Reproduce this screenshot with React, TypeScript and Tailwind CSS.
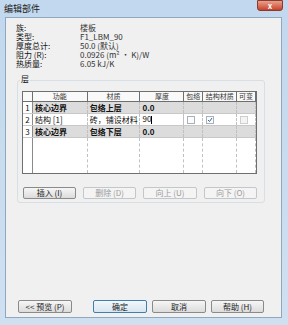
import React from 'react';

const font = { fontFamily: '"Noto Sans CJK SC", "Liberation Sans", sans-serif' };

const info = [
  ['族:', '楼板'],
  ['类型:', 'F1_LBM_90'],
  ['厚度总计:', '50.0 (默认)'],
  ['阻力 (R):', '0.0926 (m² · K)/W'],
  ['热质量:', '6.05 kJ/K'],
];

const cols = ['w-[55px]', 'w-[53px]', 'w-[44px]', 'w-[19px]', 'w-[34px]', 'w-[19px]'];

function Btn({ label, disabled, primary, w = 'w-[53px]', h = 'h-[12px]' }: { label: string; disabled?: boolean; primary?: boolean; w?: string; h?: string }) {
  return (
    <div
      className={`${w} ${h} flex items-center justify-center rounded-[2px] border text-[8px] leading-none whitespace-nowrap ${
        disabled
          ? 'border-[#c3c7ca] bg-[#f4f4f4] text-[#9a9a9a]'
          : primary
          ? 'border-[#3c7fb1] bg-gradient-to-b from-[#f2f7fb] to-[#d8e6f1] text-[#222]'
          : 'border-[#8a8a8a] bg-gradient-to-b from-[#f6f6f6] to-[#dcdcdc] text-[#222]'
      }`}
    >
      {label}
    </div>
  );
}

function Check({ checked, disabled }: { checked?: boolean; disabled?: boolean }) {
  return (
    <div className={`w-[8px] h-[8px] border ${disabled ? 'border-[#cfcfcf] bg-[#f4f4f4]' : 'border-[#a8b0b8] bg-[#fbfbfb]'} flex items-center justify-center`}>
      {checked && (
        <svg width="6" height="6" viewBox="0 0 6 6">
          <path d="M1 3 L2.5 4.5 L5 1" stroke="#3a64a8" strokeWidth="1" fill="none" />
        </svg>
      )}
    </div>
  );
}

function Row({ n, cells, gray, edit }: { n: string; cells: React.ReactNode[]; gray?: boolean; edit?: boolean }) {
  return (
    <div className="flex h-[12px] border-b border-[#c8c8c8]">
      <div className="w-[10px] flex items-center justify-center border-r border-[#8a8a8a] bg-white text-[8px] leading-none">{n}</div>
      {cells.map((c, i) => (
        <div
          key={i}
          className={`${cols[i]} flex items-center overflow-hidden whitespace-nowrap ${i >= 3 ? 'pl-[3px]' : 'px-[2px]'} border-r border-dashed border-[#c0c0c0] text-[8px] leading-none ${
            gray ? 'bg-[#dcdcdc] font-bold' : 'bg-white'
          } ${edit && i === 2 ? 'border-solid border-[#9a9a9a]' : ''}`}
        >
          {c}
        </div>
      ))}
    </div>
  );
}

export default function App() {
  return (
    <div className="w-[288px] h-[325px] bg-gradient-to-b from-[#c2d8ee] to-[#cfe0f1] flex flex-col text-[#111]" style={font}>
      <div className="h-[17px] flex items-start justify-between pl-[4px] pr-[5px]">
        <span className="text-[9px] leading-[17px] text-[#1a1a1a]">编辑部件</span>
        <div className="w-[26px] h-[11px] rounded-b-[3px] bg-gradient-to-b from-[#e8a08d] to-[#c6402a] border border-[#8c3a2c] flex items-center justify-center text-white text-[8px] font-bold leading-none">
          x
        </div>
      </div>
      <div className="flex-1 ml-[5px] mr-[6px] mb-[7px] bg-[#f0f0f0] border border-[#90a7be] flex flex-col">
        <div className="pt-[5px] pl-[10px] flex flex-col">
          {info.map(([k, v]) => (
            <div key={k} className="flex h-[9px] shrink-0 items-center text-[8px] leading-[8px] whitespace-nowrap">
              <span className="w-[64px]">{k}</span>
              <span className="text-[#333]">{v}</span>
            </div>
          ))}
        </div>
        <div className="ml-[11px] mt-[12px] w-[248px] h-[123px] border border-[#d5dfe5] rounded-[3px] relative px-[4px] pt-[10px]">
          <span className="absolute left-[2px] -top-[6px] bg-[#f0f0f0] px-[1px] text-[8px] leading-none">层</span>
          <div className="w-[235px] h-[83px] border border-[#6f6f6f] bg-white flex flex-col">
            <div className="flex h-[10px] border-b border-[#6f6f6f] bg-[#f9f9f9]">
              <div className="w-[10px] border-r border-[#6f6f6f]" />
              {['功能', '材质', '厚度', '包络', '结构材质', '可变'].map((h, i) => (
                <div key={h} className={`${cols[i]} flex items-center justify-center border-r border-[#6f6f6f] text-[7px] text-[#333] leading-none whitespace-nowrap`}>
                  {h}
                </div>
              ))}
            </div>
            <Row n="1" gray cells={['核心边界', '包络上层', '0.0', '', '', '']} />
            <Row
              n="2"
              edit
              cells={['结构 [1]', '砖，铺设材料', <span className="text-[8px]">90<span className="inline-block w-px h-[8px] bg-black align-middle" /></span>, <Check />, <Check checked />, <Check disabled />]}
            />
            <Row n="3" gray cells={['核心边界', '包络下层', '0.0', '', '', '']} />
            <div className="flex flex-1">
              <div className="w-[10px] border-r border-[#8a8a8a] bg-white" />
              {cols.map((c, i) => (
                <div key={i} className={`${c} border-r border-dashed border-[#c0c0c0]`} />
              ))}
            </div>
          </div>
          <div className="flex gap-[7px] mt-[13px] ml-[1px]">
            <Btn label="插入 (I)" />
            <Btn label="删除 (D)" disabled />
            <Btn label="向上 (U)" disabled w="w-[54px]" />
            <Btn label="向下 (O)" disabled />
          </div>
        </div>
        <div className="mt-auto mb-[4px] flex pl-[12px]">
          <Btn label="<< 预览 (P)" w="w-[54px]" h="h-[13px]" />
          <div className="ml-[21px] flex gap-[5px]">
            <Btn label="确定" primary w="w-[54px]" h="h-[13px]" />
            <Btn label="取消" w="w-[54px]" h="h-[13px]" />
            <Btn label="帮助 (H)" w="w-[53px]" h="h-[13px]" />
          </div>
        </div>
      </div>
    </div>
  );
}
